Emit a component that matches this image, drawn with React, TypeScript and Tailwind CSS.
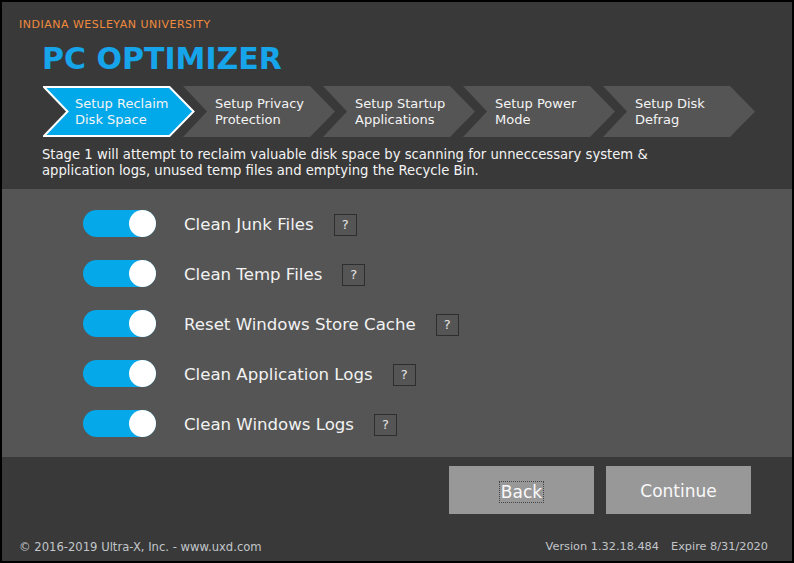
import React from "react";

const steps = [
  ["Setup Reclaim", "Disk Space"],
  ["Setup Privacy", "Protection"],
  ["Setup Startup", "Applications"],
  ["Setup Power", "Mode"],
  ["Setup Disk", "Defrag"],
];

const options = [
  "Clean Junk Files",
  "Clean Temp Files",
  "Reset Windows Store Cache",
  "Clean Application Logs",
  "Clean Windows Logs",
];

function Chevron({ lines, active }: { lines: string[]; active: boolean }) {
  return (
    <div className="relative w-[152px] h-[51px] mr-[-12px] flex items-center shrink-0">
      <svg className="absolute inset-0" width="152" height="51" viewBox="0 0 152 51">
        {active ? (
          <polygon
            points="1,1 126.5,1 150.5,25.5 126.5,50 1,50 24.5,25.5"
            fill="#02a9ea"
            stroke="#ffffff"
            strokeWidth="2"
          />
        ) : (
          <polygon points="0,0 127,0 152,25.5 127,51 0,51 24,25.5" fill="#555555" />
        )}
      </svg>
      <div className="relative pl-[32px] text-[13px] leading-[16px] text-[#f4f4f4]">
        <div>{lines[0]}</div>
        <div>{lines[1]}</div>
      </div>
    </div>
  );
}

export default function App() {
  return (
    <div
      className="w-[794px] h-[563px] bg-black p-[2px]"
      style={{ fontFamily: '"DejaVu Sans", Verdana, sans-serif' }}
    >
      <div className="w-full h-full bg-[#393939] flex flex-col">
        {/* header */}
        <div className="h-[84px] flex flex-col">
          <div className="mt-[16px] pl-[17px] text-[11px] leading-[14px] tracking-[0.5px] text-[#f08b3e]">
            INDIANA WESLEYAN UNIVERSITY
          </div>
          <div className="mt-[12px] pl-[40px] text-[30px] leading-[30px] font-bold text-[#16a4ea]">
            PC OPTIMIZER
          </div>
        </div>
        {/* steps */}
        <div className="h-[51px] flex pl-[41px]">
          {steps.map((s, i) => (
            <Chevron key={i} lines={s} active={i === 0} />
          ))}
        </div>
        {/* description */}
        <div className="h-[52px] pt-[10px] pl-[40px] text-[13.2px] leading-[16px] text-[#f4f4f4]">
          Stage 1 will attempt to reclaim valuable disk space by scanning for unneccessary system &amp;
          <br />
          application logs, unused temp files and emptying the Recycle Bin.
        </div>
        {/* options panel */}
        <div className="h-[268px] bg-[#555555] pt-[11px] pl-[81px] flex flex-col">
          {options.map((o) => (
            <div key={o} className="h-[50px] flex items-center">
              <div className="w-[73px] h-[27px] -mt-[3px] rounded-full bg-[#05a8e8] flex justify-end">
                <div className="w-[27px] h-[27px] rounded-full bg-white" />
              </div>
              <div className="ml-[28px] text-[16.6px] text-[#f2f2f2]">{o}</div>
              <div className="ml-[20px] w-[23px] h-[22px] -mt-[1px] border border-[#2e2e2e] flex items-center justify-center text-[13px] text-[#e6e6e6]">
                ?
              </div>
            </div>
          ))}
        </div>
        {/* buttons */}
        <div className="flex justify-end gap-[12px] pr-[41px] mt-[9px]">
          <div className="w-[145px] h-[48px] pt-[3px] bg-[#989898] flex items-center justify-center">
            <span className="text-[17px] leading-[20px] text-[#f8f8f8] outline-1 outline-dotted outline-[#444] px-[1px]">
              Back
            </span>
          </div>
          <div className="w-[145px] h-[48px] pt-[3px] bg-[#989898] flex items-center justify-center text-[17px] text-[#f8f8f8]">
            Continue
          </div>
        </div>
        {/* footer */}
        <div className="mt-[26px] flex justify-between pl-[17px] pr-[24px] leading-[14px] text-[#c2c6ca]">
          <span className="text-[11.6px]">© 2016-2019 Ultra-X, Inc. - www.uxd.com</span>
          <span className="text-[11.3px]">
            Version 1.32.18.484<span className="ml-[12px]">Expire 8/31/2020</span>
          </span>
        </div>
      </div>
    </div>
  );
}
